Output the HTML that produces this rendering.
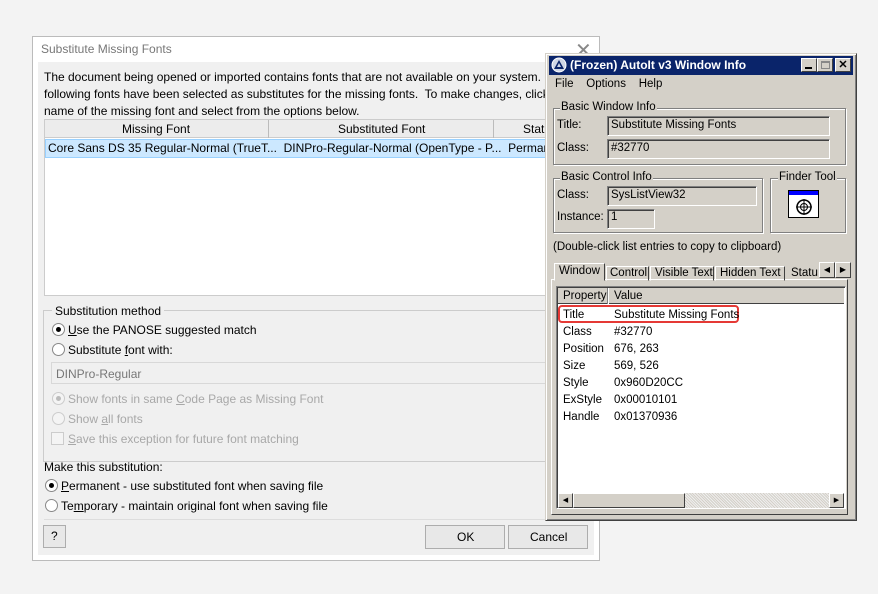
<!DOCTYPE html>
<html><head><meta charset="utf-8"><style>
*{margin:0;padding:0;box-sizing:border-box}
body{width:878px;height:594px;background:#f3f3f3;position:relative;overflow:hidden;font-family:"Liberation Sans",sans-serif;}
.a{position:absolute}
.t{font-size:12px;color:#000;white-space:nowrap}
.d{color:#a8a8a8}
.rad{position:absolute;width:13px;height:13px;border:1px solid #888;border-radius:50%;background:#fff}
.rad.on::after{content:"";position:absolute;left:3px;top:3px;width:5px;height:5px;border-radius:50%;background:#000}
.w{font-family:"Liberation Sans",sans-serif;font-size:11.5px;white-space:nowrap;color:#000}
.sunk{position:absolute;background:#d4d0c8;border-top:1px solid #808080;border-left:1px solid #808080;border-bottom:1px solid #fff;border-right:1px solid #fff;box-shadow:inset 1px 1px 0 #404040}
.grp{position:absolute;border:1px solid #808080;box-shadow:1px 1px 0 #fff, inset 1px 1px 0 #fff}
.btn{position:absolute;background:#d4d0c8;border:1px solid;border-color:#fff #404040 #404040 #fff}
</style></head><body>
<!-- Dialog -->
<div class="a" style="left:32px;top:36px;width:568px;height:525px;background:#fff;border:1px solid #bbb"></div>
<div class="a t" style="left:41px;top:42px;color:#777;font-size:12px">Substitute Missing Fonts</div>
<div class="a" style="left:575px;top:38px;font-size:20px;color:#888;font-family:'DejaVu Sans'">✕</div>
<div class="a" style="left:38px;top:62px;width:556px;height:493px;background:#f0f0f0"></div>
<div class="a t" style="left:44px;top:69px;line-height:17px">The document being opened or imported contains fonts that are not available on your system.<br>following fonts have been selected as substitutes for the missing fonts.&nbsp; To make changes, click<br>name of the missing font and select from the options below.</div>
<div class="a" style="left:44px;top:119px;width:510px;height:177px;background:#fff;border:1px solid #ccc"></div>
<div class="a" style="left:45px;top:120px;width:509px;height:18px;background:#ececec;border-bottom:1px solid #ccc"></div>
<div class="a" style="left:268px;top:120px;width:1px;height:18px;background:#bbb"></div>
<div class="a" style="left:493px;top:120px;width:1px;height:18px;background:#bbb"></div>
<div class="a t" style="left:122px;top:122px">Missing Font</div>
<div class="a t" style="left:338px;top:122px">Substituted Font</div>
<div class="a t" style="left:523px;top:122px">Statu</div>
<div class="a" style="left:45px;top:139px;width:509px;height:19px;background:#cce8ff;border:1px solid #99d1ff"></div>
<div class="a t" style="left:48px;top:141px">Core Sans DS 35 Regular-Normal (TrueT...&nbsp; DINPro-Regular-Normal (OpenType - P...&nbsp; Permane</div>
<div class="a" style="left:43px;top:310px;width:520px;height:152px;border:1px solid #ccc"></div>
<div class="a t" style="left:52px;top:304px;background:#f0f0f0;padding:0 3px">Substitution method</div>
<div class="rad on" style="left:52px;top:323px"></div>
<div class="a t" style="left:68px;top:323px"><u>U</u>se the PANOSE suggested match</div>
<div class="rad" style="left:52px;top:343px"></div>
<div class="a t" style="left:68px;top:343px">Substitute <u>f</u>ont with:</div>
<div class="a" style="left:51px;top:362px;width:510px;height:22px;background:#f0f0f0;border:1px solid #d8d8d8"></div>
<div class="a t d" style="left:56px;top:367px;color:#777">DINPro-Regular</div>
<div class="rad" style="left:52px;top:392px;border-color:#ccc;background:#f4f4f4"></div>
<div class="a" style="left:56px;top:396px;width:5px;height:5px;border-radius:50%;background:#bbb"></div>
<div class="a t d" style="left:68px;top:392px">Show fonts in same <u>C</u>ode Page as Missing Font</div>
<div class="rad" style="left:52px;top:412px;border-color:#ccc;background:#f4f4f4"></div>
<div class="a t d" style="left:68px;top:412px">Show <u>a</u>ll fonts</div>
<div class="a" style="left:51px;top:432px;width:13px;height:13px;border:1px solid #ccc;background:#f4f4f4"></div>
<div class="a t d" style="left:68px;top:432px"><u>S</u>ave this exception for future font matching</div>
<div class="a t" style="left:44px;top:460px">Make this substitution:</div>
<div class="rad on" style="left:45px;top:479px"></div>
<div class="a t" style="left:61px;top:479px"><u>P</u>ermanent - use substituted font when saving file</div>
<div class="rad" style="left:45px;top:499px"></div>
<div class="a t" style="left:61px;top:499px">Te<u>m</u>porary - maintain original font when saving file</div>
<div class="a" style="left:44px;top:519px;width:550px;height:1px;background:#ddd"></div>
<div class="a" style="left:43px;top:525px;width:23px;height:23px;background:#e8e8e8;border:1px solid #adadad"></div>
<div class="a t" style="left:51px;top:529px">?</div>
<div class="a" style="left:425px;top:525px;width:80px;height:24px;background:#e8e8e8;border:1px solid #adadad"></div>
<div class="a t" style="left:457px;top:530px">OK</div>
<div class="a" style="left:508px;top:525px;width:80px;height:24px;background:#e8e8e8;border:1px solid #adadad"></div>
<div class="a t" style="left:530px;top:530px">Cancel</div>

<!-- AutoIt window -->
<div class="a" style="left:545px;top:53px;width:312px;height:468px;background:#d4d0c8;border:1px solid;border-color:#d4d0c8 #404040 #404040 #d4d0c8;box-shadow:inset 1px 1px 0 #fff, inset -1px -1px 0 #808080"></div>
<div class="a" style="left:549px;top:56px;width:304px;height:19px;background:#0a246a"></div>
<svg class="a" style="left:551px;top:57px" width="16" height="16" viewBox="0 0 16 16"><circle cx="8" cy="8" r="7" fill="#cfd6e6" stroke="#fff"/><path d="M3 12 L8 3 L13 12 Z M6 10 L10 10 L8 6 Z" fill="#0a246a" fill-rule="evenodd"/></svg>
<div class="a" style="left:570px;top:58px;color:#fff;font-weight:bold;font-size:12px;font-family:'Liberation Sans';white-space:nowrap">(Frozen) AutoIt v3 Window Info</div>
<div class="btn" style="left:801px;top:58px;width:16px;height:14px"><div class="a" style="left:3px;top:8px;width:7px;height:2px;background:#000"></div></div>
<div class="btn" style="left:817px;top:58px;width:16px;height:14px"><div class="a" style="left:3px;top:2px;width:9px;height:8px;border:1px solid #888;border-top-width:2px"></div></div>
<div class="btn" style="left:835px;top:58px;width:16px;height:14px;font-size:11px;font-weight:bold;text-align:center;line-height:12px">✕</div>
<div class="a w" style="left:555px;top:78px">File&nbsp;&nbsp;&nbsp; Options&nbsp;&nbsp;&nbsp; Help</div>
<div class="grp" style="left:553px;top:108px;width:293px;height:57px"></div>
<div class="a w" style="left:560px;top:101px;background:#d4d0c8;padding:0 1px">Basic Window Info</div>
<div class="a w" style="left:557px;top:119px">Title:</div>
<div class="sunk" style="left:607px;top:116px;width:223px;height:20px"></div>
<div class="a w" style="left:611px;top:119px">Substitute Missing Fonts</div>
<div class="a w" style="left:557px;top:142px">Class:</div>
<div class="sunk" style="left:607px;top:139px;width:223px;height:20px"></div>
<div class="a w" style="left:611px;top:142px">#32770</div>
<div class="grp" style="left:553px;top:178px;width:210px;height:55px"></div>
<div class="a w" style="left:560px;top:171px;background:#d4d0c8;padding:0 1px">Basic Control Info</div>
<div class="a w" style="left:557px;top:189px">Class:</div>
<div class="sunk" style="left:607px;top:186px;width:150px;height:20px"></div>
<div class="a w" style="left:611px;top:189px">SysListView32</div>
<div class="a w" style="left:557px;top:211px">Instance:</div>
<div class="sunk" style="left:607px;top:209px;width:48px;height:20px"></div>
<div class="a w" style="left:611px;top:211px">1</div>
<div class="grp" style="left:770px;top:178px;width:76px;height:55px"></div>
<div class="a w" style="left:778px;top:171px;background:#d4d0c8;padding:0 1px">Finder Tool</div>
<div class="a" style="left:788px;top:190px;width:31px;height:28px;background:#fff;border:1px solid #000"><div style="height:4px;background:#0000ff"></div></div>
<svg class="a" style="left:794px;top:197px" width="20" height="20" viewBox="0 0 20 20"><circle cx="10" cy="10" r="7" fill="none" stroke="#000" stroke-width="1.5"/><circle cx="10" cy="10" r="3.5" fill="none" stroke="#000"/><path d="M10 2v16M2 10h16" stroke="#000"/></svg>
<div class="a w" style="left:553px;top:241px">(Double-click list entries to copy to clipboard)</div>
<div class="a" style="left:551px;top:279px;width:297px;height:236px;border:1px solid;border-color:#fff #404040 #404040 #fff"></div>
<div class="a" style="left:554px;top:263px;width:51px;height:18px;background:#d4d0c8;border:1px solid;border-color:#fff #404040 transparent #fff"></div>
<div class="a w" style="left:559px;top:265px">Window</div>
<div class="a" style="left:606px;top:266px;width:43px;height:15px;border:1px solid;border-color:#fff #404040 transparent #fff"></div>
<div class="a w" style="left:610px;top:267px">Control</div>
<div class="a" style="left:650px;top:266px;width:64px;height:15px;border:1px solid;border-color:#fff #404040 transparent #fff"></div>
<div class="a w" style="left:655px;top:267px">Visible Text</div>
<div class="a" style="left:715px;top:266px;width:70px;height:15px;border:1px solid;border-color:#fff #404040 transparent #fff"></div>
<div class="a w" style="left:720px;top:267px">Hidden Text</div>
<div class="a w" style="left:791px;top:267px;width:27px;overflow:hidden">Status</div>
<div class="btn" style="left:819px;top:262px;width:16px;height:16px;font-size:8px;text-align:center;line-height:14px">◀</div>
<div class="btn" style="left:835px;top:262px;width:16px;height:16px;font-size:8px;text-align:center;line-height:14px">▶</div>
<div class="a" style="left:556px;top:286px;width:290px;height:223px;background:#fff;border:1px solid;border-color:#808080 #fff #fff #808080;box-shadow:inset 1px 1px 0 #404040"></div>
<div class="a" style="left:558px;top:288px;width:286px;height:16px;background:#d4d0c8;border-bottom:1px solid #404040"></div>
<div class="a" style="left:607px;top:288px;width:1px;height:16px;background:#808080"></div>
<div class="a" style="left:608px;top:288px;width:1px;height:16px;background:#fff"></div>
<div class="a w" style="left:563px;top:290px">Property</div>
<div class="a w" style="left:614px;top:290px">Value</div>
<div class="a" style="left:558px;top:305px;width:181px;height:18px;border:2.5px solid #e53935;border-radius:4px"></div>
<div class="a w" style="left:563px;top:307px;line-height:17px">Title<br>Class<br>Position<br>Size<br>Style<br>ExStyle<br>Handle</div>
<div class="a w" style="left:614px;top:307px;line-height:17px">Substitute Missing Fonts<br>#32770<br>676, 263<br>569, 526<br>0x960D20CC<br>0x00010101<br>0x01370936</div>
<div class="a" style="left:558px;top:493px;width:286px;height:15px;background:repeating-linear-gradient(45deg,#eee 0 1px,#d4d0c8 1px 2px)"></div>
<div class="btn" style="left:558px;top:493px;width:15px;height:15px;font-size:7px;text-align:center;line-height:13px">◀</div>
<div class="btn" style="left:573px;top:493px;width:112px;height:15px"></div>
<div class="btn" style="left:829px;top:493px;width:15px;height:15px;font-size:7px;text-align:center;line-height:13px">▶</div>
</body></html>
